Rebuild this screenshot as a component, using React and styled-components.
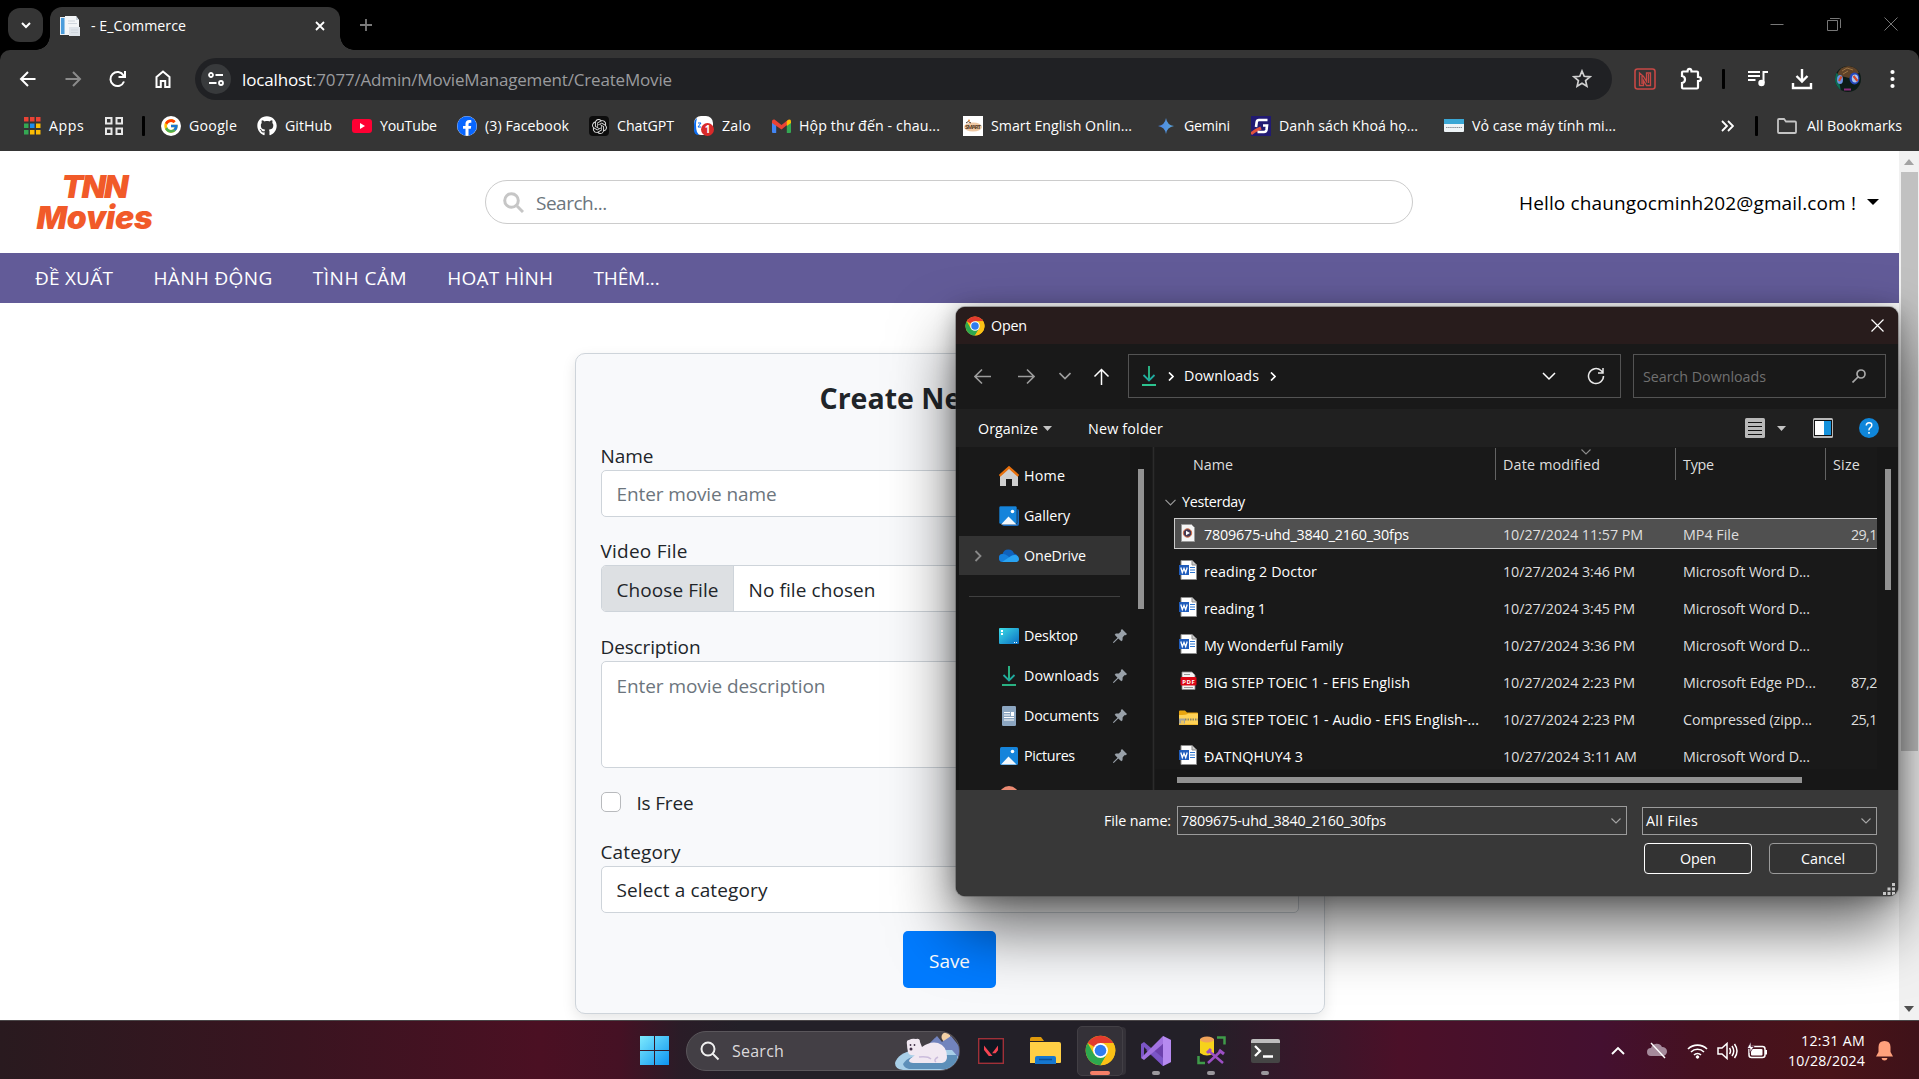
import React, { useLayoutEffect, useRef, useState } from "react";
import styled, { createGlobalStyle } from "styled-components";
import { FcGoogle } from "react-icons/fc";
import { FaGithub, FaFacebook } from "react-icons/fa";
import { SiOpenai } from "react-icons/si";

const Global = createGlobalStyle`
  *, *::before, *::after { box-sizing: border-box; }
  html, body { margin: 0; padding: 0; overflow: hidden; background: #000; }
  body { font-family: "Open Sans", "Noto Sans", sans-serif; font-size: 19px; }
  svg { display: block; flex: none; }
`;

/* ---------- text with a set measure ---------- */
const FitBox = styled.span`
  display: inline-block;
  flex: none;
  white-space: pre;
  width: ${(p) => p.$w}px;
  line-height: 1.3;
  position: relative;
  top: ${(p) => p.$dy ?? 1}px;
`;
function Fit({ w, dy, children }) {
  const ref = useRef(null);
  const [spacing, setSpacing] = useState(0);
  useLayoutEffect(() => {
    const range = document.createRange();
    range.selectNodeContents(ref.current);
    const natural = range.getBoundingClientRect().width;
    setSpacing((w - natural) / Math.max(1, ref.current.textContent.length - 0.5));
  }, [w]);
  return (
    <FitBox ref={ref} $w={w} $dy={dy} style={{ letterSpacing: spacing }}>
      {children}
    </FitBox>
  );
}

const Screen = styled.div`
  position: relative;
  width: 1919px;
  height: 1079px;
  display: flex;
  flex-direction: column;
  overflow: hidden;
`;
const Space = styled.div`
  flex: ${(p) => (p.$w ? "none" : "1")};
  width: ${(p) => (p.$w ? p.$w + "px" : "auto")};
`;

/* ---------- browser ---------- */
const TabStrip = styled.div`
  height: 50px;
  flex: none;
  background: #000;
  display: flex;
  align-items: flex-start;
  padding-left: 8px;
`;
const TabSearch = styled.div`
  width: 35px;
  height: 34px;
  margin: 8px 7px 0 0;
  border-radius: 12px;
  background: #353535;
  display: grid;
  place-items: center;
`;
const Tab = styled.div`
  position: relative;
  width: 290px;
  height: 43px;
  margin-top: 7px;
  padding: 0 13px 6px 10px;
  border-radius: 12px 12px 0 0;
  background: #353535;
  color: #fff;
  font-size: 14.2px;
  display: flex;
  align-items: center;
  &::before, &::after {
    content: "";
    position: absolute;
    bottom: 0;
    width: 14px;
    height: 14px;
  }
  &::before { left: -14px; background: radial-gradient(circle at 0 0, transparent 13.5px, #353535 14px); }
  &::after { right: -14px; background: radial-gradient(circle at 100% 0, transparent 13.5px, #353535 14px); }
`;
const NewTab = styled.div`
  width: 16px;
  margin: 17px 0 0 18px;
`;
const WindowButtons = styled.div`
  display: flex;
  gap: 43px;
  padding: 17px 21px 0 0;
`;
const Toolbar = styled.div`
  height: 57px;
  flex: none;
  background: #353535;
  border-radius: 10px 10px 0 0;
  display: flex;
  align-items: center;
  padding: 1px 17px 0 17px;
`;
const NavIcons = styled.div`
  display: flex;
  width: 178px;
  gap: 23px;
`;
const Omnibox = styled.div`
  width: 1417px;
  height: 42px;
  border-radius: 21px;
  background: #202124;
  display: flex;
  align-items: center;
  padding: 0 20px 0 6px;
  font-size: 17px;
  color: #9a9b9e;
`;
const SiteInfo = styled.div`
  width: 30px;
  height: 30px;
  border-radius: 50%;
  background: #383a3c;
  display: grid;
  place-items: center;
  margin-right: 11px;
`;
const White = styled.span`color: #fff;`;
const Divider = styled.div`
  width: 3px;
  height: ${(p) => p.$h || 20}px;
  border-radius: 1px;
  background: #000;
`;
const Avatar = styled.div`
  width: 26px;
  height: 26px;
  border-radius: 50%;
  overflow: hidden;
`;
const BookmarkBar = styled.div`
  height: 44px;
  flex: none;
  background: #353535;
  display: flex;
  align-items: center;
  padding: 0 17px 6px 23px;
  color: #fff;
  font-size: 14.2px;
`;
const Bookmark = styled.div`
  display: flex;
  align-items: center;
  gap: 8px;
  margin-right: ${(p) => p.$mr ?? 20}px;
`;
const Square = styled.div`
  width: 20px;
  height: 20px;
  border-radius: ${(p) => p.$r || 0}px;
  background: ${(p) => p.$bg || "transparent"};
  display: grid;
  place-items: center;
  flex: none;
`;

/* ---------- page ---------- */
const Viewport = styled.div`
  height: 869px;
  flex: none;
  display: flex;
  background: #fff;
`;
const Page = styled.div`
  width: 1899px;
  display: flex;
  flex-direction: column;
`;
const Header = styled.header`
  height: 102px;
  flex: none;
  display: flex;
  align-items: center;
  padding: 0 20px 0 37px;
`;
const Logo = styled.div`
  width: 115px;
  margin-right: 333px;
  display: flex;
  flex-direction: column;
  align-items: center;
  font: italic 900 32px/31px Inter, sans-serif;
  color: #f15a29;
  ${FitBox} { line-height: 31px; }
`;
const SearchField = styled.div`
  width: 929px;
  height: 44px;
  border: 1px solid #ccc;
  border-radius: 22px;
  display: flex;
  align-items: center;
  padding-left: 17px;
  gap: 12px;
  color: #6c757d;
`;
const Account = styled.div`
  margin-left: 106px;
  display: flex;
  align-items: center;
  gap: 11px;
  color: #000;
`;
const Menu = styled.nav`
  height: 50px;
  flex: none;
  background: #625b98;
  color: #fff;
  display: flex;
  align-items: center;
  gap: 40.4px;
  padding-left: 35px;
`;
const Content = styled.main`
  flex: 1;
  display: flex;
  justify-content: center;
  align-items: flex-start;
  padding-top: 50px;
`;
const Card = styled.form`
  width: 750px;
  height: 661px;
  border: 1px solid #ced4da;
  border-radius: 10px;
  background: #f8f9fb;
  box-shadow: 0 5px 14px rgba(0, 0, 0, 0.1);
  padding: 25px;
  color: #212529;
  display: flex;
  flex-direction: column;
`;
const Title = styled.h2`
  margin: 0 0 28px;
  height: 38px;
  text-align: center;
  font-size: 28.5px;
  font-weight: 700;
  display: flex;
  justify-content: center;
  align-items: center;
`;
const Label = styled.label`
  height: 25px;
  display: flex;
  align-items: center;
`;
const Control = styled.div`
  height: ${(p) => p.$h || 47}px;
  flex: none;
  margin-bottom: ${(p) => p.$mb}px;
  border: 1px solid #ced4da;
  border-radius: 5px;
  background: #fff;
  display: flex;
  align-items: ${(p) => (p.$top ? "flex-start" : "center")};
  padding: ${(p) => (p.$top ? "12px 15px" : "0 15px")};
  color: ${(p) => (p.$muted ? "#6c757d" : "#212529")};
  overflow: hidden;
`;
const ChooseButton = styled.div`
  align-self: stretch;
  margin: 0 15px 0 -15px;
  padding: 0 15px;
  width: 132px;
  background: #dde0e3;
  border-right: 1px solid #ced4da;
  display: flex;
  align-items: center;
`;
const CheckRow = styled.div`
  display: flex;
  height: 24px;
  align-items: center;
  gap: 16px;
  margin-bottom: 27px;
`;
const CheckBox = styled.div`
  width: 20px;
  height: 20px;
  border: 1px solid #b8babd;
  border-radius: 5px;
  background: #fff;
`;
const SaveButton = styled.button`
  align-self: center;
  width: 93px;
  height: 57px;
  border: 0;
  border-radius: 5px;
  background: #007bff;
  color: #fff;
  font: inherit;
  padding: 0;
`;
const PageScroll = styled.div`
  width: 20px;
  background: #f1f1f1;
  display: flex;
  flex-direction: column;
  align-items: center;
  padding-top: 8px;
`;
const PageThumb = styled.div`
  width: 17px;
  height: 579px;
  margin-top: 7px;
  background: #c1c1c1;
`;

/* ---------- file dialog ---------- */
const Dialog = styled.section`
  position: absolute;
  left: 956px;
  top: 307px;
  width: 942px;
  height: 589px;
  border-radius: 9px;
  overflow: hidden;
  background: #191919;
  color: #fff;
  font-size: 14.3px;
  display: flex;
  flex-direction: column;
  box-shadow: 0 0 0 1px rgba(70, 70, 70, 0.4), 0 32px 64px rgba(0, 0, 0, 0.6), 0 2px 21px rgba(0, 0, 0, 0.3);
`;
const DialogTitle = styled.div`
  height: 37px;
  background: #281c1c;
  display: flex;
  align-items: center;
  padding: 0 14px 0 9px;
  gap: 6px;
`;
const AddressRow = styled.div`
  height: 65px;
  display: flex;
  align-items: center;
  padding: 0 12px 1px 18px;
`;
const Box = styled.div`
  width: ${(p) => p.$w}px;
  height: ${(p) => p.$h}px;
  border: 1px solid ${(p) => p.$line || "#535353"};
  background: ${(p) => p.$bg || "transparent"};
  display: flex;
  align-items: center;
  padding: ${(p) => p.$pad || "0 13px"};
  color: ${(p) => p.$ink || "#fff"};
`;
const CommandRow = styled.div`
  height: 38px;
  background: #202020;
  display: flex;
  align-items: center;
  padding: 0 19px 0 22px;
`;
const Body = styled.div`
  height: 343px;
  display: grid;
  grid-template-columns: 3px 171px 22px 3px 722px 21px;
  overflow: hidden;
`;
const Edge = styled.div`background: #151515;`;
const Splitter = styled.div`
  background: #2b2b2b;
  border-right: 1px solid #1d1d1d;
  border-left: 1px solid #1d1d1d;
`;
const Sidebar = styled.div`
  height: 343px;
  overflow: hidden;
  padding-top: 9px;
`;
const SideItem = styled.div`
  height: 40px;
  padding-left: 15px;
  display: flex;
  align-items: center;
  background: ${(p) => (p.$active ? "#333" : "transparent")};
  border-bottom: 1px solid #191919;
`;
const SideCaret = styled.div`width: 25px;`;
const SideIcon = styled.div`
  width: 20px;
  margin-right: 5px;
  display: grid;
  place-items: center;
`;
const SideRule = styled.div`
  height: 40px;
  display: flex;
  align-items: center;
  padding: 0 10px;
  &::after { content: ""; flex: 1; height: 1px; background: #404040; }
`;
const Track = styled.div`
  background: #171717;
  padding: 22px 0 0 8px;
`;
const Thumb = styled.div`
  width: ${(p) => p.$w}px;
  height: ${(p) => p.$h}px;
  background: #929292;
`;
const Files = styled.div`
  overflow: hidden;
  display: flex;
  flex-direction: column;
`;
const Columns = styled.div`
  height: 33px;
  flex: none;
  display: grid;
  grid-template-columns: 340px 180px 150px 52px;
  padding-top: 1px;
  color: #dedede;
`;
const ColumnHead = styled.div`
  position: relative;
  border-left: ${(p) => (p.$first ? 0 : 1)}px solid #636363;
  padding: 2px 0 0 ${(p) => (p.$first ? 38 : 7)}px;
  display: flex;
  align-items: center;
  overflow: hidden;
`;
const SortMark = styled.div`
  position: absolute;
  left: 85px;
  top: 1px;
`;
const Group = styled.div`
  height: 38px;
  flex: none;
  padding: 6px 0 0 10px;
  display: flex;
  align-items: center;
  gap: 6px;
`;
const Rows = styled.div`
  height: 251px;
  overflow: hidden;
  display: flex;
  flex-direction: column;
  gap: 6px;
`;
const Row = styled.div`
  flex: none;
  height: 31px;
  margin-left: 19px;
  padding-left: 4px;
  display: grid;
  grid-template-columns: 25px 299px 180px 168px 26px;
  align-items: center;
  white-space: nowrap;
  color: #dedede;
  border: 1px solid ${(p) => (p.$selected ? "#ccc" : "transparent")};
  border-right: 0;
  background: ${(p) => (p.$selected ? "#505050" : "transparent")};
`;
const FileMark = styled.div`
  width: 18px;
  display: grid;
  place-items: center;
  padding-bottom: 2px;
`;
const HScroll = styled.div`
  flex: 1;
  background: #171717;
  padding: 8px 0 0 22px;
`;
const Footer = styled.div`
  flex: 1;
  background: #383838;
  display: flex;
  flex-direction: column;
  gap: 8px;
  align-items: flex-end;
  padding: 16px 21px 0 0;
  position: relative;
`;
const NameLine = styled.div`
  display: flex;
  height: 29px;
  align-items: center;
`;
const Buttons = styled.div`
  display: flex;
  gap: 17px;
`;
const DialogButton = styled.div`
  width: 108px;
  height: 31px;
  flex: none;
  border: 1px solid ${(p) => (p.$primary ? "#fff" : "#9a9a9a")};
  border-radius: 4px;
  background: #333;
  display: grid;
  place-items: center;
`;
const Grip = styled.div`
  position: absolute;
  right: 3px;
  bottom: 1px;
`;

/* ---------- taskbar ---------- */
const Taskbar = styled.footer`
  height: 59px;
  flex: none;
  border-top: 1px solid #4a4648;
  background: linear-gradient(90deg, #291a1f 0, #3a1420 300px, #4b1023 540px, #451124 620px, #2a1c27 680px, #232028 740px, #232028 1200px, #35182a 1290px, #4b1028 1400px, #441030 1600px, #451120 1700px, #491318 1830px, #3f1219 100%);
  display: flex;
  align-items: center;
  padding: 1px 26px 0 640px;
  color: #fff;
  font-size: 14.2px;
`;
const TaskSearch = styled.div`
  width: 274px;
  height: 40px;
  margin: 0 18px 0 17px;
  border-radius: 20px;
  border: 1px solid #5a565b;
  background: #433f45;
  display: flex;
  align-items: center;
  gap: 12px;
  padding-left: 13px;
  font-size: 16px;
  color: #dcdadc;
  overflow: hidden;
`;
const Task = styled.div`
  position: relative;
  width: 46px;
  height: 50px;
  margin-right: ${(p) => p.$mr ?? 9}px;
  border-radius: 5px;
  display: grid;
  place-items: center;
  background: ${(p) => (p.$active ? "#343138" : "transparent")};
  border: 1px solid ${(p) => (p.$active ? "#423f45" : "transparent")};
  box-shadow: ${(p) => (p.$active ? "4px 0 0 -1px #343138" : "none")};
  &::after {
    content: "";
    position: absolute;
    bottom: 0;
    width: ${(p) => (p.$active ? 20 : 8)}px;
    height: 4px;
    border-radius: 2px;
    background: ${(p) => (p.$active ? "#f47f68" : p.$running ? "#9b989d" : "transparent")};
  }
`;
const Tray = styled.div`
  display: flex;
  align-items: center;
`;
const Clock = styled.div`
  display: flex;
  flex-direction: column;
  align-items: flex-end;
  margin: 0 11px 0 20px;
  ${FitBox} { line-height: 20px; }
`;

/* ---------- drawings ---------- */
const Line = ({ w = 20, h = w, box = "0 0 20 20", c = "#e8e8e8", s = 2, d, children }) => (
  <svg width={w} height={h} viewBox={box} fill="none" stroke={c} strokeWidth={s}>
    {d && <path d={d} />}
    {children}
  </svg>
);
const Chrome = ({ size }) => (
  <svg width={size} height={size} viewBox="0 0 48 48">
    <circle cx="24" cy="24" r="23" fill="#fbc116" />
    <path d="M24 24 4.1 12.5A23 23 0 0 1 43.9 12.5H24Z" fill="#e33b2e" />
    <path d="M4.1 12.5A23 23 0 0 0 24 47L34 29.8 24 24 14 29.8Z" fill="#2da94f" />
    <path d="M43.9 12.5H24V24l10 5.8L24 47A23 23 0 0 0 43.9 12.5Z" fill="#fbc116" />
    <circle cx="24" cy="24" r="11.5" fill="#fff" />
    <circle cx="24" cy="24" r="9" fill="#2f7cf0" />
  </svg>
);
const DownloadGreen = () => (
  <svg width="16" height="20" viewBox="0 0 16 20" fill="none" stroke="#2cc38f" strokeWidth="1.8">
    <path d="M8 0v14" /><path d="M2.5 9 8 14.5 13.5 9" stroke="#20aba0" /><path d="M1 19h14" />
  </svg>
);
const PictureIcon = ({ stacked }) => (
  <svg width="20" height="20" viewBox="0 0 20 20">
    {stacked && <rect x="3" y="3" width="17" height="17" rx="2" fill="#1769bd" />}
    <rect x={stacked ? 0 : 1} y={stacked ? 0 : 1} width="18" height="18" rx="1.5" fill="#1584db" stroke={stacked ? "#191919" : "none"} strokeWidth=".6" />
    <path d="M2 18.5 9.5 10.5 17.5 18.5Z" fill="#f2f8fd" /><circle cx="13.5" cy="5.5" r="1.8" fill="#fff" />
  </svg>
);
const HomeIcon = () => (
  <svg width="20" height="20" viewBox="0 0 20 20">
    <path d="M1 9 10 1l9 8v11h-6v-7H7v7H1Z" fill="#cfcfcf" />
    <path d="M.5 9.8 10 1.4l9.5 8.4" fill="none" stroke="#e8700d" strokeWidth="2.4" />
  </svg>
);
const CloudIcon = () => (
  <svg width="20" height="14" viewBox="0 0 20 14">
    <path d="M4 13A4 4 0 0 1 3.500 5 6 6 0 0 1 15 4.500 4.400 4.400 0 0 1 16 13Z" fill="#0f62bd" />
    <path d="M4 13A4 4 0 0 1 4 5c2 0 3 .7 5 2l5 6Z" fill="#1580dc" />
    <path d="M3 13 12 7c3-2 8-1 8 3a3 3 0 0 1-3 3Z" fill="#29a3f2" />
  </svg>
);
const DesktopIcon = () => (
  <svg width="20" height="16" viewBox="0 0 20 16">
    <defs><linearGradient id="desk" x1="0" y1="0" x2="1" y2="1"><stop stopColor="#3cdde6" /><stop offset="1" stopColor="#0c6fc4" /></linearGradient></defs>
    <rect width="20" height="16" rx="1" fill="url(#desk)" />
    <path d="M2 2h2v2H2zM2 5h2v2H2zM15 14h1v1h-1zM17 14h1v1h-1z" fill="#fff" />
  </svg>
);
const DocumentIcon = () => (
  <svg width="14" height="20" viewBox="0 0 14 20">
    <rect width="14" height="20" rx="1.2" fill="#8ca6c1" />
    <path d="M2 6.500h6M2 9h6M2 11.500h10M2 14h10" stroke="#fff" strokeWidth="1.1" /><path d="M9 6h3v4H9z" fill="#fff" />
  </svg>
);
const Pin = () => (
  <svg width="14" height="14" viewBox="0 0 14 14" fill="#99a1a9">
    <path d="M9 0 14 5l-1.200 1.200-1-.2L9.700 8.300 9.500 11.300 8.300 12.300 5.300 9.500 1 13.800 0 14 .2 13 4.500 8.700 1.700 5.800 2.800 4.600l3-.2L8 2.200 7.800 1.200Z" />
  </svg>
);
const WordIcon = () => (
  <svg width="18" height="20" viewBox="0 0 18 20">
    <path d="M2 .5h11L17.500 5v14.500H2Z" fill="#fff" stroke="#8c8c8c" /><path d="M13 .5V5h4.500" fill="#ccc" stroke="#8c8c8c" />
    <path d="M11 7.500h5M11 10h5M11 12.500h5" stroke="#2f77d0" strokeWidth="1.2" />
    <rect y="5" width="10" height="10" fill="#1f5cbc" />
    <path d="m1.800 7.500 1.500 5L5 8.500l1.700 4 1.500-5" stroke="#fff" strokeWidth="1.3" fill="none" />
  </svg>
);
const SmallLabel = styled.text`font: 700 6px "Open Sans", sans-serif; fill: #fff;`;
const PdfIcon = () => (
  <svg width="18" height="20" viewBox="0 0 18 20">
    <path d="M3 1h10l3 3v14.500H3Z" fill="#f3f3f3" stroke="#888" strokeWidth=".8" />
    <path d="M5 3.500h6M5 16.500h9" stroke="#999" />
    <rect x="1.500" y="6" width="16" height="8.500" rx="1" fill="#dc0614" />
    <SmallLabel x="3.200" y="12.600" textLength="12.500">PDF</SmallLabel>
  </svg>
);
const ZipIcon = () => (
  <svg width="19" height="16" viewBox="0 0 19 16">
    <path d="M0 1.500Q0 .5 1 .5h5l2 2h10q1 0 1 1V15H0Z" fill="#e8a40e" />
    <path d="M0 5Q8 5 9 3.500h10v11H0Z" fill="#ffd257" />
    <path d="M6 9.500h13" stroke="#8b8568" strokeWidth="2" strokeDasharray="1.500 1" /><path d="M0 8.500h6v5H0Z" fill="#a5a49b" /><path d="M2 10.500h3v4H2Z" fill="#e9c564" />
  </svg>
);
const VideoIcon = () => (
  <svg width="14" height="18" viewBox="0 0 14 18">
    <path d="M.5.5h10l3 3v14H.5Z" fill="#f5f5f5" stroke="#999" />
    <circle cx="6.500" cy="9" r="4.200" fill="#443954" stroke="#d36c45" strokeWidth="1" /><path d="m5 6.800 4 2.200-4 2.200Z" fill="#fff" />
  </svg>
);
const fileIcons = { word: WordIcon, pdf: PdfIcon, zip: ZipIcon, video: VideoIcon };

const AppsIcon = () => (
  <svg width="18" height="20" viewBox="0 0 18 20">
    {["#ea4335", "#ea4335", "#ea4335", "#34a853", "#1a8cf0", "#fbbc04", "#34a853", "#fbbc04", "#fbbc04"].map((c, i) => (
      <rect key={i} x={1 + (i % 3) * 6} y={1 + Math.floor(i / 3) * 6.5} width="4.500" height="4.500" fill={c} />
    ))}
  </svg>
);
const YouTube = () => (
  <svg width="20" height="14" viewBox="0 0 20 14"><rect width="20" height="14" rx="3" fill="#ff0033" /><path d="m8 4 5 3-5 3Z" fill="#fff" /></svg>
);
const Badge = styled.text`font: 700 10px "Open Sans", sans-serif; fill: #fff;`;
const Zalo = () => (
  <svg width="20" height="20" viewBox="0 0 20 20">
    <rect width="19" height="19" rx="7" fill="#fff" /><path d="M3 2Q0 4 0 9v5q0 5 5 5L3 16Q1 9 3 2Z" fill="#0b6cf0" />
    <path d="M4 7h3l-3 4h3" stroke="#0b6cf0" fill="none" /><circle cx="13.500" cy="13.500" r="6.500" fill="#d92a2a" />
    <Badge x="10.800" y="17.300">1</Badge>
  </svg>
);
const Gmail = () => (
  <svg width="19" height="14" viewBox="0 0 19 14">
    <path d="M0 2v11q0 1 1 1h3.200V6Z" fill="#4285f4" /><path d="M19 2v11q0 1-1 1h-3.200V6Z" fill="#34a853" />
    <path d="M0 2.500Q0 0 2.500.5L9.500 6l7-5.500 1.500 3L9.500 10.500 0 4Z" fill="#ea4335" /><path d="M14.800 2Q19-1 19 2.500V4l-4.200 3Z" fill="#fbbc04" />
  </svg>
);
const TinyLabel = styled.text`font: 700 6px "Open Sans", sans-serif; fill: #5b3f28;`;
const Smart = () => (
  <svg width="20" height="20" viewBox="0 0 20 20"><rect width="20" height="20" fill="#fff" /><ellipse cx="10" cy="11" rx="9" ry="4.500" fill="#efc8a3" /><path d="M3 7q2-3 5 0" stroke="#4a3a2c" fill="none" /><circle cx="6" cy="4.500" r="1" fill="#e68a3a" /><TinyLabel x="2" y="13" textLength="16">SMART</TinyLabel></svg>
);
const Gemini = () => (
  <svg width="16" height="16" viewBox="0 0 16 16"><defs><linearGradient id="gem"><stop stopColor="#4a84e6" /><stop offset="1" stopColor="#5ba4d8" /></linearGradient></defs><path d="M8 0Q9 7 16 8 9 9 8 16 7 9 0 8 7 7 8 0Z" fill="url(#gem)" /></svg>
);
const Gicon = () => (
  <svg width="20" height="20" viewBox="0 0 20 20"><rect width="20" height="20" fill="#211a72" /><path d="M0 18Q3 15 10 12" stroke="#e0513e" strokeWidth="3" fill="none" /><path d="M16.500 4H8Q6 4 5.700 6L5 11M12 9.500h4L15.500 14q-.5 2-2.500 2H6.500" fill="none" stroke="#fff" strokeWidth="2.600" /></svg>
);
const CaseIcon = () => (
  <svg width="20" height="13" viewBox="0 0 20 13"><rect width="20" height="13" rx="1" fill="#eef4f7" /><rect width="20" height="5" fill="#3aa7d5" /><path d="M2 8.500h16" stroke="#8a9299" strokeDasharray="1.500 .6" /></svg>
);
const Face = () => (
  <svg width="26" height="26" viewBox="0 0 26 26">
    <rect width="26" height="26" fill="#0c1b16" /><path d="M2 9Q5 0 14 0q8 0 10 7L14 12Z" fill="#5f4228" /><path d="M7 5l5-3 6 2M8 8l5-3" stroke="#9c7443" fill="none" /><path d="M0 6v16l6 4L3 8Z" fill="#0d6a52" />
    <ellipse cx="5" cy="13.500" rx="3" ry="4.500" fill="#6f93de" /><ellipse cx="19.500" cy="12.500" rx="5" ry="6" fill="#2446b8" /><ellipse cx="20" cy="12.500" rx="3.200" ry="4" fill="#aac4ee" />
    <path d="m4 15 2.500-4.500M18.500 10l4 5" stroke="#d6492b" strokeWidth="2.200" /><path d="M9 23.500h7" stroke="#8c2b7a" strokeWidth="2" />
  </svg>
);
const Favicon = () => (
  <svg width="20" height="20" viewBox="0 0 20 20"><path d="M0 1h6v18H0Z" fill="#e8eef4" /><path d="M1 2h3.500v16H1Z" fill="#4a9cdb" /><path d="M5 0h11l3 4v15H5Z" fill="#f4f6f8" /><path d="M16 0v4h3Z" fill="#c9d2db" /><path d="M9 11h11v9H9Z" fill="#dfe4ea" /><path d="M11 14h7M11 16.500h7M8 5h7M8 7.500h9" stroke="#d0d6dd" /></svg>
);
const Bear = () => (
  <svg width="64" height="38" viewBox="0 0 64 38">
    <path d="M30 16 40 6l6 5 6-5 12 8v24H30Z" fill="#5b6ba8" /><circle cx="51" cy="5" r="4.500" fill="#f2cfa4" /><path d="M34 12 42 4l5 6 9-6 8 10v12H34Z" fill="#7283bd" />
    <path d="M0 31Q3 21 19 18h38l7 8q0 11-12 12H8Q0 37 0 31Z" fill="#a8cfe8" /><path d="M8 32q5-9 24-9h30q2 9-8 14H14q-5-1-6-5Z" fill="#5d8fb9" />
    <path d="M12 13q-1-5 2-5 3-2 7-1 4-1 4 3l2 5q8-6 16-4 9 3 9 14 0 5-5 6H18q-6-1-3-4l5-4q-6 1-7-3-1-4-1-7Z" fill="#f1e8f2" />
    <path d="M24 25q9-1 12 2M43 25q-5 3-2 5" stroke="#cbbcdc" strokeWidth="1.500" fill="none" /><circle cx="15.500" cy="13" r=".9" fill="#413049" /><circle cx="19.500" cy="13" r=".9" fill="#413049" /><circle cx="16" cy="17" r="1.500" fill="#413049" />
  </svg>
);

const bookmarks = [
  ["Google", 48, <Square $r={10} $bg="#fff"><FcGoogle size={16} /></Square>],
  ["GitHub", 47, <FaGithub size={20} />],
  ["YouTube", 57, <YouTube />],
  ["(3) Facebook", 84, <Square $r={10} $bg="#fff"><FaFacebook size={20} color="#0866ff" /></Square>],
  ["ChatGPT", 57, <Square $r={4} $bg="#0d0d0d"><SiOpenai size={15} color="#ddd" /></Square>],
  ["Zalo", 29, <Zalo />],
  ["Hộp thư đến - chau...", 141, <Square><Gmail /></Square>, 23],
  ["Smart English Onlin...", 141, <Smart />, 24],
  ["Gemini", 46, <Square><Gemini /></Square>, 21],
  ["Danh sách Khoá họ...", 139, <Gicon />, 26],
  ["Vỏ case máy tính mi...", 144, <CaseIcon />],
];
const menu = [["ĐỀ XUẤT", 78], ["HÀNH ĐỘNG", 119], ["TÌNH CẢM", 94], ["HOẠT HÌNH", 106], ["THÊM...", 66]];
const side = [
  ["Home", 41, <HomeIcon />],
  ["Gallery", 46, <PictureIcon stacked />],
  ["OneDrive", 62, <CloudIcon />, "active"],
  null,
  ["Desktop", 54, <DesktopIcon />, "pin"],
  ["Downloads", 75, <DownloadGreen />, "pin"],
  ["Documents", 75, <DocumentIcon />, "pin"],
  ["Pictures", 51, <PictureIcon />, "pin"],
];
const files = [
  ["video", "7809675-uhd_3840_2160_30fps", 205, "10/27/2024 11:57 PM", 140, "MP4 File", 56, "29,1"],
  ["word", "reading 2 Doctor", 113, "10/27/2024 3:46 PM", 132, "Microsoft Word D...", 127, ""],
  ["word", "reading 1", 62, "10/27/2024 3:45 PM", 132, "Microsoft Word D...", 127, ""],
  ["word", "My Wonderful Family", 139, "10/27/2024 3:36 PM", 132, "Microsoft Word D...", 127, ""],
  ["pdf", "BIG STEP TOEIC 1 - EFIS English", 206, "10/27/2024 2:23 PM", 132, "Microsoft Edge PD...", 133, "87,2"],
  ["zip", "BIG STEP TOEIC 1 - Audio - EFIS English-...", 275, "10/27/2024 2:23 PM", 132, "Compressed (zipp...", 129, "25,1"],
  ["word", "ĐATNQHUY4 3", 99, "10/27/2024 3:11 AM", 134, "Microsoft Word D...", 127, ""],
];

function Browser() {
  return (
    <>
      <TabStrip>
        <TabSearch><Line w={12} box="0 0 12 12" s={2} c="#fff" d="m2 4 4 4 4-4" /></TabSearch>
        <Tab>
          <Favicon /><Space $w={11} /><Fit w={95} dy={1}>- E_Commerce</Fit><Space />
          <Line w={14} box="0 0 14 14" c="#fff" s={1.8} d="m3 3 8 8M11 3 3 11" />
        </Tab>
        <NewTab><Line w={16} box="0 0 16 16" c="#7b7b7b" s={1.8} d="M8 2v12M2 8h12" /></NewTab>
        <Space />
        <WindowButtons>
          <Line w={14} box="0 0 14 14" c="#777" s={1} d="M.5 7.500h13" />
          <Line w={14} box="0 0 14 14" c="#777" s={1} d="M.5 3.500h10v10H.5ZM3 1.500h9.500q1 0 1 1V11" />
          <Line w={14} box="0 0 14 14" c="#777" s={1} d="m.5.5 13 13M13.500.5l-13 13" />
        </WindowButtons>
      </TabStrip>
      <Toolbar>
        <NavIcons>
          <Line w={22} box="0 0 22 22" c="#fff" d="M18.500 11H4M11 4l-7 7 7 7" />
          <Line w={22} box="0 0 22 22" c="#8b8b8b" d="M3.500 11H18M11 4l7 7-7 7" />
          <Line w={22} box="0 0 22 22" c="#fff" d="M17 13.500a7 7 0 1 1-.5-6L17.500 9M18 3v6h-6.500" />
          <Line w={22} box="0 0 22 22" c="#fff" d="M4.500 9 11 3.500 17.500 9v10h-4.300v-6H8.800v6H4.500Z" />
        </NavIcons>
        <Omnibox>
          <SiteInfo><Line w={18} box="0 0 18 18" c="#fff" s={1.8}><circle cx="4" cy="5" r="2" /><circle cx="14" cy="13" r="2" /><path d="M8.500 5H16M2 13h7.500" /></Line></SiteInfo>
          <White><Fit w={70} dy={1}>localhost</Fit></White>
          <Fit w={360} dy={1}>:7077/Admin/MovieManagement/CreateMovie</Fit>
          <Space />
          <Line w={20} c="#d0d0d0" s={1.7} d="m10 2 2.200 5.300 5.800.5-4.400 3.800 1.300 5.700L10 14.300l-4.900 3 1.300-5.700L2 7.800l5.800-.5Z" />
        </Omnibox>
        <Space $w={22} />
        <Line w={22} box="0 0 22 22" c="#c74845" s={1.6}><rect x="1" y="1" width="20" height="20" rx="2.500" /><path d="M5.500 17.500V5l4 3.500 3 5 0-8.500h4v12.500h-4l-3-5v5ZM8 8v8M14.500 6v9" strokeWidth="1.3" /></Line>
        <Space $w={23} />
        <Line w={24} box="0 0 24 24" c="#fff" s={2.200} d="M4 4.500h4.500Q8.500 1.800 10.500 1.800T12.500 4.500H18q1 0 1 1V10q3 0 3 2t-3 2v6.500q0 1-1 1H4q-1 0-1-1V16q3-.5 3-3.500T3 9V5.500q0-1 1-1Z" />
        <Space $w={19} /><Divider /><Space $w={22} />
        <Line w={22} box="0 0 22 22" c="#fff" s={2} d="M1 4h12M1 8h12M1 12h7.500M16.500 15V4H21"><circle cx="14.500" cy="15" r="2.200" fill="#fff" /></Line>
        <Space $w={22} />
        <Line w={22} box="0 0 22 22" c="#fff" s={2.400} d="M11 1v12M5.500 8l5.500 5.500L16.500 8M2 15v5h18v-5" />
        <Space $w={22} />
        <Avatar><Face /></Avatar>
        <Space />
        <svg width="20" height="20" viewBox="0 0 20 20" fill="#fff"><circle cx="10.500" cy="3" r="2.100" /><circle cx="10.500" cy="10" r="2.100" /><circle cx="10.500" cy="17" r="2.100" /></svg>
      </Toolbar>
      <BookmarkBar>
        <Bookmark $mr={20}><AppsIcon /><Fit w={35} dy={0}>Apps</Fit></Bookmark>
        <Line w={20} c="#e8e8e8" s={2} d="M2 2h5.500v5.500H2ZM12.500 2H18v5.500h-5.500ZM2 12.500h5.500V18H2ZM12.500 12.500H18V18h-5.500Z" />
        <Space $w={18} /><Divider /><Space $w={16} />
        {bookmarks.map(([name, w, icon, mr]) => (
          <Bookmark key={name} $mr={mr}>{icon}<Fit w={w} dy={0}>{name}</Fit></Bookmark>
        ))}
        <Space />
        <Line w={14} box="0 0 14 14" c="#fff" s={1.800} d="m2 2 5 5-5 5M8 2l5 5-5 5" />
        <Space $w={21} /><Divider /><Space $w={19} />
        <Line w={20} h={16} box="0 0 20 16" c="#c4c4c4" s={1.800} d="M1 2q0-1 1-1h5l2 2.500h9q1 0 1 1V14q0 1-1 1H2q-1 0-1-1Z" />
        <Space $w={10} /><Fit w={95} dy={0}>All Bookmarks</Fit>
      </BookmarkBar>
    </>
  );
}

function MoviePage() {
  return (
    <Viewport>
      <Page>
        <Header>
          <Logo><Fit w={66} dy={0}>TNN</Fit><Fit w={116} dy={0}>Movies</Fit></Logo>
          <SearchField>
            <Line w={21} box="0 0 21 21" c="#c6c6c6" s={3} d="m14 14 6 6"><circle cx="8.500" cy="8.500" r="6.800" /></Line>
            <Fit w={71}>Search...</Fit>
          </SearchField>
          <Account>
            <Fit w={337}>Hello chaungocminh202@gmail.com !</Fit>
            <svg width="12" height="6"><path d="M0 0h12L6 6Z" /></svg>
          </Account>
        </Header>
        <Menu>{menu.map(([t, w]) => <Fit key={t} w={w} dy={0}>{t}</Fit>)}</Menu>
        <Content>
          <Card>
            <Title><Fit w={260} dy={1}>Create New Movie</Fit></Title>
            <Label><Fit w={53} dy={-1}>Name</Fit></Label>
            <Control $mb={23} $muted><Fit w={160} dy={1}>Enter movie name</Fit></Control>
            <Label><Fit w={87} dy={-1}>Video File</Fit></Label>
            <Control $mb={24}><ChooseButton><Fit w={102} dy={2}>Choose File</Fit></ChooseButton><Fit w={127} dy={2}>No file chosen</Fit></Control>
            <Label><Fit w={100} dy={-1}>Description</Fit></Label>
            <Control $h={107} $mb={22} $muted $top><Fit w={209} dy={0}>Enter movie description</Fit></Control>
            <CheckRow><CheckBox /><Fit w={57} dy={1}>Is Free</Fit></CheckRow>
            <Label><Fit w={80} dy={-1}>Category</Fit></Label>
            <Control $mb={18}><Fit w={151} dy={1}>Select a category</Fit></Control>
            <SaveButton type="button"><Fit w={41} dy={1}>Save</Fit></SaveButton>
          </Card>
        </Content>
      </Page>
      <PageScroll>
        <svg width="10" height="6"><path d="M0 6h10L5 0Z" fill="#a3a3a3" /></svg>
        <PageThumb />
        <Space />
        <Space $w={20}><svg width="20" height="16"><path d="M5 2h10l-5 6Z" fill="#505050" /></svg></Space>
      </PageScroll>
    </Viewport>
  );
}

function OpenDialog() {
  return (
    <Dialog>
      <DialogTitle>
        <Chrome size={20} /><Fit w={36} dy={1}>Open</Fit><Space />
        <Line w={13} box="0 0 13 13" c="#fff" s={1.200} d="m.5.5 12 12M12.500.5l-12 12" />
      </DialogTitle>
      <AddressRow>
        <Line w={17} box="0 0 17 17" c="#9c9c9c" s={1.600} d="M17 8.500H1.500M8 1.500l-7 7 7 7" />
        <Space $w={27} />
        <Line w={17} box="0 0 17 17" c="#9c9c9c" s={1.600} d="M0 8.500h15.500M9 1.500l7 7-7 7" />
        <Space $w={24} />
        <Line w={12} box="0 0 12 12" c="#9c9c9c" s={1.700} d="m.5 3 5.500 5.500L11.500 3" />
        <Space $w={22} />
        <Line w={17} box="0 0 17 17" c="#fff" s={1.500} d="M8.500 17V1.500M1.500 8.500l7-7 7 7" />
        <Space $w={18} />
        <Box $w={493} $h={44} $pad="0 15px 0 12px">
          <DownloadGreen /><Space $w={11} />
          <Line w={6} h={9} box="0 0 6 9" c="#fff" s={1.700} d="m1 .5 4 4-4 4" />
          <Space $w={10} /><Fit w={75} dy={0}>Downloads</Fit><Space $w={11} />
          <Line w={6} h={9} box="0 0 6 9" c="#fff" s={1.700} d="m1 .5 4 4-4 4" />
          <Space />
          <Line w={14} h={10} box="0 0 14 10" c="#fff" s={1.500} d="m1 2 6 6 6-6" />
          <Space $w={31} />
          <Line w={18} box="0 0 18 18" c="#e8e8e8" s={1.500} d="M16.500 9A7.500 7.500 0 1 1 14 3.500L16 5.500M16 1v5h-5" />
        </Box>
        <Space />
        <Box $w={253} $h={44} $pad="0 19px 0 9px" $ink="#707070">
          <Fit w={123} dy={1}>Search Downloads</Fit><Space />
          <Line w={14} box="0 0 14 14" c="#a8a8a8" s={1.700} d="M6.500 7.500.5 13.500"><circle cx="9" cy="5" r="4" /></Line>
        </Box>
      </AddressRow>
      <CommandRow>
        <Fit w={60}>Organize</Fit><Space $w={5} />
        <svg width="9" height="5"><path d="M0 0h9L4.500 5Z" fill="#c4c4c4" /></svg>
        <Space $w={36} /><Fit w={75}>New folder</Fit><Space />
        <svg width="20" height="20"><rect width="20" height="20" rx="1.500" fill="#b8b8b8" /><path d="M3 4.500h14M3 8.500h14M3 12.500h14M3 16.500h14" stroke="#111" /></svg>
        <Space $w={12} />
        <svg width="9" height="5"><path d="M0 0h9L4.500 5Z" fill="#c4c4c4" /></svg>
        <Space $w={27} />
        <svg width="20" height="20"><rect width="20" height="20" rx="1.500" fill="#b8b8b8" /><rect x="1.500" y="2.500" width="17" height="15" fill="#fff" stroke="#111" /><path d="M11 3h7v14h-7Z" fill="#1592dc" /></svg>
        <Space $w={26} />
        <svg width="20" height="20" fill="none"><circle cx="10" cy="10" r="10" fill="#0f86da" /><path d="M7.300 7.600q0-2.900 2.800-2.900t2.700 2.600q0 1.400-1.500 2.400T10 12.300M10 14v1.800" stroke="#fff" strokeWidth="1.500" /></svg>
      </CommandRow>
      <Body>
        <Edge />
        <Sidebar>
          {side.map((it, i) => it === null ? <SideRule key={i} /> : (
            <SideItem key={i} $active={it[3] === "active"}>
              <SideCaret>{it[3] === "active" && <Line w={8} h={12} box="0 0 8 12" c="#8a8a8a" s={1.800} d="m1.500 1 5 5-5 5" />}</SideCaret>
              <SideIcon>{it[2]}</SideIcon>
              <Fit w={it[1]}>{it[0]}</Fit><Space />
              {it[3] === "pin" && <><Pin /><Space $w={3} /></>}
            </SideItem>
          ))}
          <SideItem><SideCaret /><SideIcon><svg width="20" height="20"><circle cx="10" cy="10" r="10" fill="#ea8a72" /></svg></SideIcon></SideItem>
        </Sidebar>
        <Track><Thumb $w={6} $h={140} /></Track>
        <Splitter />
        <Files>
          <Columns>
            <ColumnHead $first><Fit w={40} dy={0}>Name</Fit></ColumnHead>
            <ColumnHead><Fit w={97} dy={0}>Date modified</Fit><SortMark><Line w={10} h={6} box="0 0 10 6" c="#8a8a8a" s={1.100} d="m.5.5 4.500 4.500L9.500.5" /></SortMark></ColumnHead>
            <ColumnHead><Fit w={31} dy={0}>Type</Fit></ColumnHead>
            <ColumnHead><Fit w={27} dy={0}>Size</Fit></ColumnHead>
          </Columns>
          <Group><Line w={11} h={7} box="0 0 11 7" c="#9a9a9a" s={1.200} d="m.5.8 5 5 5-5" /><Fit w={63} dy={0}>Yesterday</Fit></Group>
          <Rows>
            {files.map(([kind, name, nw, date, dw, type, tw, size], i) => {
              const Icon = fileIcons[kind];
              return (
                <Row key={i} $selected={i === 0}>
                  <FileMark><Icon /></FileMark>
                  <White><Fit w={nw} dy={1}>{name}</Fit></White>
                  <Fit w={dw} dy={2}>{date}</Fit>
                  <Fit w={tw} dy={2}>{type}</Fit>
                  {size ? <Fit w={26} dy={2}>{size}</Fit> : <span />}
                </Row>
              );
            })}
          </Rows>
          <HScroll><Thumb $w={625} $h={6} /></HScroll>
        </Files>
        <Track><Thumb $w={6} $h={121} /></Track>
      </Body>
      <Footer>
        <NameLine>
          <Fit w={67}>File name:</Fit><Space $w={6} />
          <Box $w={450} $h={29} $pad="0 5px 0 3px" $line="#9b9b9b">
            <Fit w={205}>7809675-uhd_3840_2160_30fps</Fit><Space />
            <Line w={10} h={6} box="0 0 10 6" c="#a5a5a5" s={1.100} d="m.5.5 4.500 4.500L9.500.5" />
          </Box>
          <Space $w={15} />
          <Box $w={235} $h={28} $pad="0 5px 0 3px" $line="#9b9b9b" $bg="#333">
            <Fit w={52}>All Files</Fit><Space />
            <Line w={10} h={6} box="0 0 10 6" c="#a5a5a5" s={1.100} d="m.5.5 4.500 4.500L9.500.5" />
          </Box>
        </NameLine>
        <Buttons>
          <DialogButton $primary><Fit w={36}>Open</Fit></DialogButton>
          <DialogButton><Fit w={44}>Cancel</Fit></DialogButton>
        </Buttons>
        <Grip><svg width="12" height="12" fill="#c5c5c5"><path d="M9 0h3v3H9zM9 4.500h3v3H9zM4.500 4.500h3v3h-3zM9 9h3v3H9zM4.500 9h3v3h-3zM0 9h3v3H0z" /></svg></Grip>
      </Footer>
    </Dialog>
  );
}

function Bar() {
  return (
    <Taskbar>
      <svg width="29" height="29" viewBox="0 0 29 29">
        <defs><linearGradient id="win" x1="0" y1="0" x2="1" y2="1"><stop stopColor="#7deafd" /><stop offset="1" stopColor="#0d94f0" /></linearGradient></defs>
        <path d="M0 0h14v14H0zM15 0h14v14H15zM0 15h14v14H0zM15 15h14v14H15z" fill="url(#win)" />
      </svg>
      <TaskSearch>
        <Line w={20} c="#f0f0f0" s={2} d="m12.500 12.500 6 6"><circle cx="8" cy="8" r="6.500" /></Line>
        <Fit w={52}>Search</Fit><Space /><Bear />
      </TaskSearch>
      <svg width="26" height="26" viewBox="0 0 26 26"><rect x=".7" y=".7" width="24.600" height="24.600" fill="#0f1620" stroke="#a03038" strokeWidth="1.400" /><path d="M6 7.500 14.500 18h-3.700L6 12ZM20 7.500v4.800L17.600 15.300h-3.500Z" fill="#f24452" /></svg>
      <Space $w={18} />
      <Task $mr={9}>
        <svg width="31" height="28" viewBox="0 0 31 28"><path d="M0 2q0-2 2-2h9l3 4H0Z" fill="#df9a0c" /><path d="M0 5h29q2 0 2 2v18q0 1-1 1H0Z" fill="#ffcf45" /><path d="M5 27v-6q0-2 2-2h17q2 0 2 2v6Z" fill="#1577cf" /><path d="M9 22.500h13" stroke="#0a4f94" strokeWidth="1.500" /></svg>
      </Task>
      <Task $active $mr={10}><Chrome size={31} /></Task>
      <Task $running>
        <svg width="30" height="30" viewBox="0 0 30 30"><path d="M22 0 30 4v22l-8 4L5 14.500 22 8Z" fill="#6c41ad" /><path d="M22 0 30 4v22l-8 4Z" fill="#b68af0" /><path d="M0 8 3 6l19 16v8L3 11v9l-3 2Z" fill="#7b55c6" /><path d="M0 22 22 0v8L3 24Z" fill="#a273e0" /></svg>
      </Task>
      <Task $running $mr={8}>
        <svg width="29" height="29" viewBox="0 0 29 29"><path d="M3 3v14q7 5 14 0V3Z" fill="#f6d21c" /><ellipse cx="10" cy="3.500" rx="7" ry="3" fill="#f0a35a" /><path d="M20 1.500h7.500v7M1.500 20v7H8" fill="none" stroke="#3f9b49" strokeWidth="2.500" /><path d="m12 15 14 12M24 15 11 27" stroke="#9c4fc4" strokeWidth="2.500" /><path d="m10 17 4-4M22 14l5 4" stroke="#9c4fc4" strokeWidth="3" /></svg>
      </Task>
      <Task $running>
        <svg width="29" height="24" viewBox="0 0 29 24"><rect width="29" height="24" rx="2" fill="#454545" /><path d="M0 4V2q0-2 2-2h25q2 0 2 2v2Z" fill="#bdbdbd" /><path d="m4 7 5 5-5 5M12 17.500h10" stroke="#fff" strokeWidth="2.300" fill="none" /></svg>
      </Task>
      <Space />
      <Tray>
        <Line w={14} h={9} box="0 0 14 9" c="#fff" s={1.900} d="m1 8 6-6 6 6" />
        <Space $w={22} />
        <svg width="21" height="17" viewBox="0 0 21 17"><path d="M4 14a4 4 0 0 1 0-8 6 6 0 0 1 11-1 4.500 4.500 0 0 1 1 9Z" fill="#a58a9b" /><path d="m4 1 14 15" stroke="#fff" strokeWidth="1.400" /></svg>
        <Space $w={19} />
        <Line w={21} h={16} box="0 0 21 16" c="#fff" s={1.600} d="M1 6a13.500 13.500 0 0 1 19 0M4 9a9.200 9.200 0 0 1 13 0M7 12a5 5 0 0 1 7 0"><circle cx="10.500" cy="14" r="1.300" fill="#fff" strokeWidth="1" /></Line>
        <Space $w={9} />
        <Line w={21} h={18} box="0 0 21 18" c="#fff" s={1.500} d="M1 6h4l5-4.500v15L5 12H1ZM12.500 6q2 3 0 6M15 4q3.500 5 0 10M17.500 2q5 7 0 14" />
        <Space $w={9} />
        <svg width="21" height="17" viewBox="0 0 21 17"><rect x="2" y="4.500" width="16" height="11" rx="2.500" fill="none" stroke="#fff" strokeWidth="1.500" /><rect x="4" y="7" width="11.500" height="6.500" rx="1" fill="#fff" /><path d="M19 8v4.500" stroke="#fff" strokeWidth="2" /><path d="M4-.5 0 6.500h3v4l4-6H4Z" fill="#fff" stroke="#45112a" strokeWidth=".8" /></svg>
        <Clock><Fit w={64} dy={0}>12:31 AM</Fit><Fit w={77} dy={0}>10/28/2024</Fit></Clock>
        <svg width="17" height="20" viewBox="0 0 17 20" fill="#ffa07c"><path d="M8.500 0Q14.500 0 14.500 6v5l2.500 4.500H0L2.500 11V6q0-6 6-6ZM5.500 17h6q-.5 2.500-3 2.500T5.500 17Z" /></svg>
      </Tray>
    </Taskbar>
  );
}

export default function App() {
  return (
    <Screen>
      <Global />
      <Browser />
      <MoviePage />
      <Bar />
      <OpenDialog />
    </Screen>
  );
}
